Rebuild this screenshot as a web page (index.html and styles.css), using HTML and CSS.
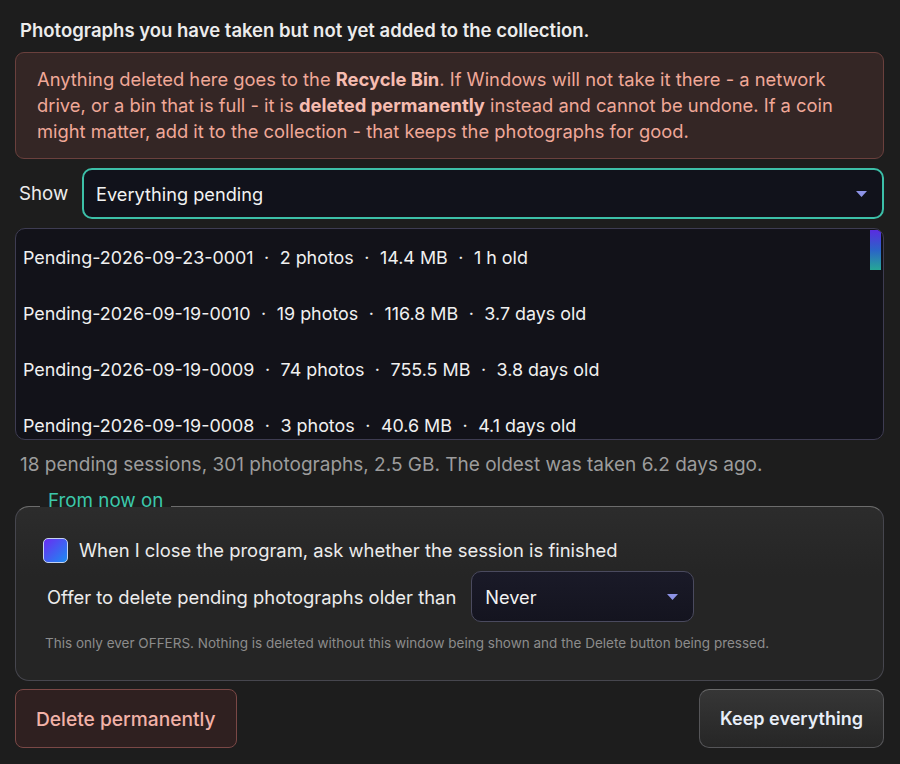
FILE: index.html
```html
<!DOCTYPE html>
<html lang="en">
<head>
    <meta charset="UTF-8">
    <title>Pending photographs</title>
    <link rel="stylesheet" href="styles.css">
</head>
<body>
    <div class="page">
        <h1 class="intro">Photographs you have taken but not yet added to the collection.</h1>

        <div class="warning">
            Anything deleted here goes to the <b>Recycle Bin</b>. If Windows will not take it there - a network
            drive, or a bin that is full - it is <b>deleted permanently</b> instead and cannot be undone. If a coin
            might matter, add it to the collection - that keeps the photographs for good.
        </div>

        <div class="show-row">
            <span class="show-label">Show</span>
            <div class="combo combo-wide">
                <span>Everything pending</span>
                <svg class="arrow" width="11" height="6" viewBox="0 0 11 6"><path d="M0 0 H11 L5.5 6 Z" fill="#8d93e6"/></svg>
            </div>
        </div>

        <div class="sessions">
            <div class="row">Pending-2026-09-23-0001<span class="dot">·</span>2 photos<span class="dot">·</span>14.4 MB<span class="dot">·</span>1 h old</div>
            <div class="row">Pending-2026-09-19-0010<span class="dot">·</span>19 photos<span class="dot">·</span>116.8 MB<span class="dot">·</span>3.7 days old</div>
            <div class="row">Pending-2026-09-19-0009<span class="dot">·</span>74 photos<span class="dot">·</span>755.5 MB<span class="dot">·</span>3.8 days old</div>
            <div class="row">Pending-2026-09-19-0008<span class="dot">·</span>3 photos<span class="dot">·</span>40.6 MB<span class="dot">·</span>4.1 days old</div>
            <div class="thumb"></div>
        </div>

        <p class="summary">18 pending sessions, 301 photographs, 2.5 GB. The oldest was taken 6.2 days ago.</p>

        <fieldset class="options">
            <legend>From now on</legend>
            <label class="check-row">
                <span class="checkbox"></span>
                When I close the program, ask whether the session is finished
            </label>
            <div class="offer-row">
                <span>Offer to delete pending photographs older than</span>
                <div class="combo combo-small">
                    <span>Never</span>
                    <svg class="arrow" width="11" height="6" viewBox="0 0 11 6"><path d="M0 0 H11 L5.5 6 Z" fill="#8d93e6"/></svg>
                </div>
            </div>
            <p class="note">This only ever OFFERS. Nothing is deleted without this window being shown and the Delete button being pressed.</p>
        </fieldset>

        <div class="buttons">
            <button class="btn-delete">Delete permanently</button>
            <button class="btn-keep">Keep everything</button>
        </div>
    </div>
</body>
</html>
```

FILE: styles.css
```css
*{
    box-sizing: border-box;
}
body{
    margin: 0;
    background-color: #1d1d1d;
    font-family: Inter, "Noto Sans", sans-serif;
    color: #ececec;
}
.page{
    padding: 18px 16px 0 15px;
    display: flex;
    flex-direction: column;
}
.intro{
    margin: 0 0 10px 5px;
    font-size: 18.5px;
    font-weight: 600;
    line-height: 24px;
    color: #ececec;
}
.warning{
    background-color: #342625;
    border: 1px solid #6a403d;
    border-radius: 9px;
    padding: 13px 18px 14px 21px;
    font-size: 18.35px;
    line-height: 26px;
    color: #f0a898;
}
.warning b{
    color: #f6bcb1;
    font-weight: 700;
}
.show-row{
    display: flex;
    align-items: center;
    margin-top: 9px;
}
.show-label{
    font-size: 18.7px;
    width: 67px;
    padding-left: 4px;
}
.combo{
    display: flex;
    align-items: center;
    justify-content: space-between;
    height: 51px;
    border-radius: 10px;
    font-size: 18.2px;
    color: #f2f2f2;
    padding: 0 15px 0 12px;
}
.combo-wide{
    flex: 1;
    background-color: #11121b;
    border: 2px solid #3cbfa8;
}
.combo-small{
    width: 223px;
    background: linear-gradient(#1a1a28, #14141f);
    border: 1px solid #4a4a5e;
    padding: 0 15px 0 13px;
}
.sessions{
    position: relative;
    margin-top: 9px;
    height: 212px;
    background-color: #121219;
    border: 1px solid #3e3c52;
    border-radius: 10px;
    overflow: hidden;
}
.thumb{
    position: absolute;
    top: 1px;
    right: 2px;
    width: 11px;
    height: 40px;
    background: linear-gradient(#5a2ce0, #2b63c8 50%, #26a896);
}
.row{
    height: 56px;
    display: flex;
    align-items: center;
    padding-left: 7px;
    font-size: 17.9px;
    color: #f0f0f0;
    white-space: pre;
}
.dot{
    padding: 0 10.5px;
}
.summary{
    margin: 14px 0 0 5px;
    font-size: 19px;
    line-height: 22px;
    color: #9c9c9c;
}
.options{
    margin: 15px 0 0 0;
    padding: 14px 20px 29px 27px;
    border: 1px solid #46464e;
    border-top-color: #6c6c6c;
    border-radius: 14px;
    background: linear-gradient(#2c2c2c, #252525 40%);
}
.options legend{
    margin-left: -3px;
    padding: 0 8px 10px 8px;
    font-size: 18.8px;
    line-height: 20px;
    color: #3cc8ab;
}
.check-row{
    display: flex;
    align-items: center;
    font-size: 18.4px;
    color: #ececec;
    height: 30px;
}
.checkbox{
    width: 25px;
    height: 25px;
    border-radius: 5px;
    border: 1.5px solid #c3d2f0;
    background: linear-gradient(135deg, #6a2cf2, #1c8cf2);
    margin-right: 11px;
}
.offer-row{
    display: flex;
    align-items: center;
    margin-top: 6px;
    padding-left: 4px;
    font-size: 18.4px;
    color: #ececec;
}
.offer-row > span{
    margin-right: 15px;
}
.note{
    margin: 13px 0 0 2px;
    font-size: 13.5px;
    color: #8c8c8c;
}
.buttons{
    display: flex;
    justify-content: space-between;
    margin-top: 8px;
}
.btn-delete, .btn-keep{
    height: 59px;
    padding: 0 20px;
    font-family: Inter, "Noto Sans", sans-serif;
    cursor: pointer;
}
.btn-delete{
    background-color: #2f2020;
    border: 1px solid #7a4846;
    border-radius: 8px;
    color: #f2b2a8;
    font-size: 19.2px;
    font-weight: 500;
}
.btn-keep{
    background: linear-gradient(#363636, #262626);
    border: 1px solid #555558;
    border-top-color: #6a6a6a;
    border-radius: 10px;
    color: #e8eef8;
    font-size: 18px;
    font-weight: 600;
}
```
